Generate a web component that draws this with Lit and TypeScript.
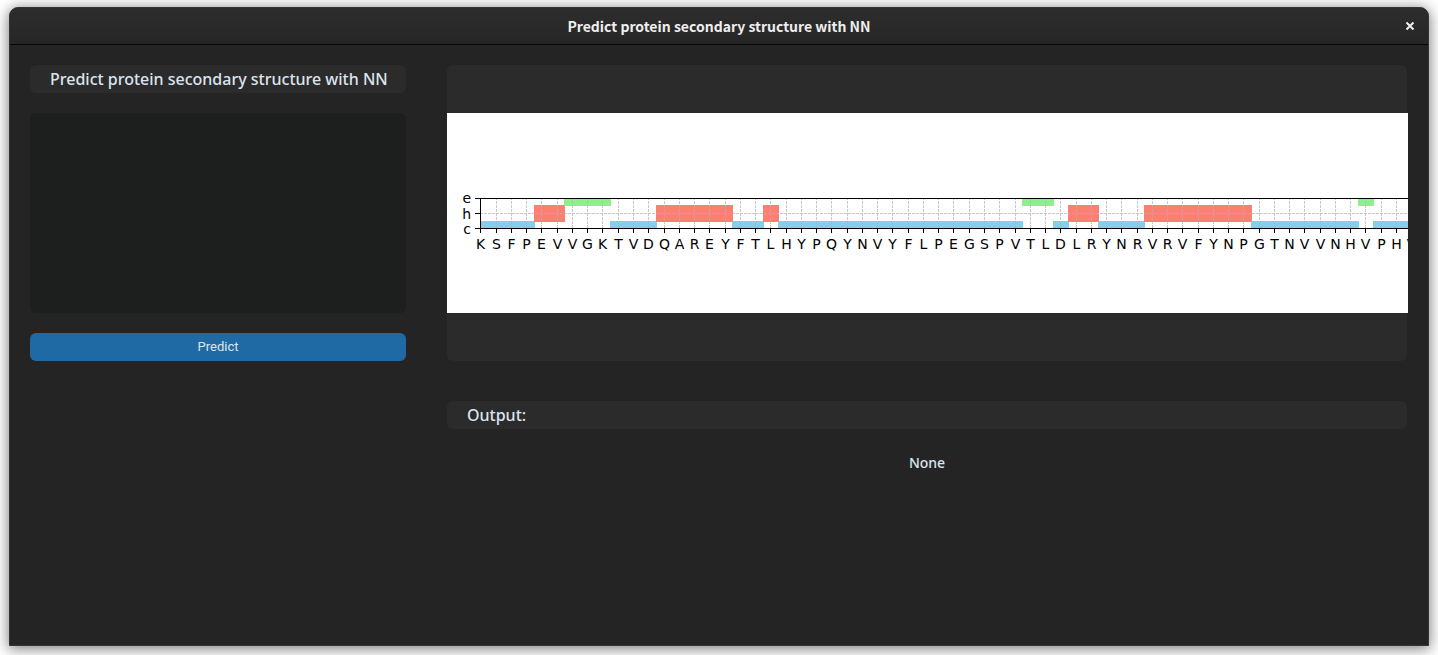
import { LitElement, html, svg, css } from "lit";
import { customElement, property } from "lit/decorators.js";

type State = "c" | "h" | "e";

const SEQUENCE = "KSFPEVVGKTVDQAREYFTLHYPQYNVYFLPEGSPVTLDLRYNRVRVFYNPGTNVVNHVPHV";

const RUNS: [State, number][] = [
  ["c", 4], ["h", 2], ["e", 3], ["c", 3], ["h", 5], ["c", 2], ["h", 1],
  ["c", 16], ["e", 2], ["c", 1], ["h", 2], ["c", 3], ["h", 7], ["c", 7],
  ["e", 1], ["c", 3],
];

const STEP = 15.26;
const ORIGIN = 33.4;
const LEFT = 33;
const TOP = 85;
const MID = 100;
const BOTTOM = 115;

const BAR: Record<State, { y: number; h: number }> = {
  e: { y: TOP, h: 8 },
  h: { y: 92, h: 17 },
  c: { y: 108, h: 8 },
};

const STATE_AXIS = [
  { name: "e", y: TOP, baseline: 90 },
  { name: "h", y: MID, baseline: 106 },
  { name: "c", y: BOTTOM, baseline: 121 },
];

@customElement("structure-plot")
export class StructurePlot extends LitElement {
  @property() sequence = SEQUENCE;

  static styles = css`
    :host { display: block; height: 200px; overflow: hidden; background: #fff; }
    .plot { display: block; width: 100%; height: 200px; }
    .e { fill: #90ee90; }
    .h { fill: #fa8072; }
    .c { fill: #87ceeb; }
    .grid { stroke: #b0b0b0; stroke-opacity: 0.7; stroke-dasharray: 3 1; }
    .axis { stroke: #000; }
    .label { font: 14px "DejaVu Sans", sans-serif; fill: #000; text-anchor: middle; }
    .state { text-anchor: end; }
  `;

  render() {
    const tick = (i: number) => Math.round(ORIGIN + STEP * i) + 0.5;
    let start = 0;
    const bars = RUNS.map(([state, count]) => {
      const x0 = Math.max(LEFT + 0.5, Math.round(ORIGIN + STEP * (start - 0.5)));
      start += count;
      const x1 = Math.round(ORIGIN + STEP * (start - 0.5)) + 1;
      const b = BAR[state];
      return svg`<rect class=${state} x=${x0} y=${b.y} width=${x1 - x0} height=${b.h} />`;
    });
    const residues = [...this.sequence];
    return html`
      <svg class="plot" role="img" aria-label="Secondary structure plot">
        ${bars}
        ${residues.map((_, i) => svg`<line class="grid" x1=${tick(i)} x2=${tick(i)} y1=${BOTTOM} y2=${TOP} />`)}
        <line class="grid" x1=${LEFT} x2="100%" y1=${MID + 0.5} y2=${MID + 0.5} />
        <line class="axis" x1=${LEFT} x2="100%" y1=${TOP + 0.5} y2=${TOP + 0.5} />
        <line class="axis" x1=${LEFT} x2="100%" y1=${BOTTOM + 0.5} y2=${BOTTOM + 0.5} />
        <line class="axis" x1=${LEFT + 0.5} x2=${LEFT + 0.5} y1=${TOP} y2=${BOTTOM + 1} />
        ${STATE_AXIS.map(({ name, y, baseline }) => svg`
          <line class="axis" x1=${LEFT - 5} x2=${LEFT} y1=${y + 0.5} y2=${y + 0.5} />
          <text class="label state" x=${LEFT - 9} y=${baseline}>${name}</text>`)}
        ${residues.map((r, i) => svg`
          <line class="axis" x1=${tick(i)} x2=${tick(i)} y1=${BOTTOM} y2=${BOTTOM + 5} />
          <text class="label" x=${tick(i)} y="136">${r}</text>`)}
      </svg>
    `;
  }
}

@customElement("app-root")
export class AppRoot extends LitElement {
  static styles = css`
    :host {
      display: block;
      box-sizing: border-box;
      height: 100vh;
      padding: 7px 9px 9px;
      background: #fff;
      font-family: "Noto Sans", sans-serif;
      color: #dce4ee;
    }
    * { box-sizing: border-box; }
    .window {
      height: 100%;
      display: flex;
      flex-direction: column;
      background: #242424;
      border: 1px solid #353535;
      border-radius: 9px 9px 0 0;
      box-shadow: 0 2px 14px 1px rgba(0, 0, 0, 0.5);
      overflow: hidden;
    }
    .titlebar {
      display: grid;
      grid-template-columns: 36px 1fr 36px;
      align-items: center;
      height: 37px;
      flex: none;
      background: linear-gradient(#2d2d2d, #262626);
      border-bottom: 1px solid #060606;
    }
    .title {
      grid-column: 2;
      margin: 0;
      text-align: center;
      font-family: "Noto Sans CJK SC", "Noto Sans", sans-serif;
      font-size: 14px;
      line-height: 20px;
      font-weight: 700;
      color: #eee;
    }
    .close {
      width: 36px;
      height: 36px;
      padding: 0;
      border: 0;
      background: none;
      display: grid;
      place-items: center;
    }
    .content {
      flex: 1;
      display: grid;
      grid-template-columns: 376px minmax(0, 1fr);
      align-items: start;
      gap: 41px;
      padding: 20px 21px 20px 20px;
    }
    .side { display: flex; flex-direction: column; gap: 20px; }
    .heading {
      display: block;
      padding: 0 20px;
      border-radius: 6px;
      background: #2b2b2b;
      font-size: 16px;
      line-height: 28px;
      font-weight: 500;
      white-space: nowrap;
    }
    .sequence {
      display: block;
      width: 100%;
      height: 200px;
      padding: 8px;
      border: 0;
      border-radius: 6px;
      outline: none;
      resize: none;
      background: #1d1e1e;
      color: inherit;
      font: inherit;
    }
    .predict {
      height: 28px;
      padding: 0 0 2px;
      border: 0;
      border-radius: 6px;
      background: #1f6aa5;
      color: #dce4ee;
      font: 13px Roboto, sans-serif;
    }
    .main { display: flex; flex-direction: column; }
    .figure { padding: 48px 0; border-radius: 6px; background: #2b2b2b; }
    .chart { margin-right: -1px; }
    .output-title { margin: 40px 0 20px; }
    .output {
      display: block;
      text-align: center;
      font-size: 14px;
      line-height: 28px;
      font-weight: 500;
    }
  `;

  render() {
    return html`
      <div class="window">
        <header class="titlebar">
          <h1 class="title">Predict protein secondary structure with NN</h1>
          <button class="close" aria-label="Close">
            <svg width="10" height="10" viewBox="0 0 10 10" stroke="#eee" stroke-width="2">
              <path d="M1.5 1.5l7 7M8.5 1.5l-7 7" />
            </svg>
          </button>
        </header>
        <main class="content">
          <section class="side">
            <label class="heading" for="sequence">Predict protein secondary structure with NN</label>
            <textarea class="sequence" id="sequence" spellcheck="false"></textarea>
            <button class="predict">Predict</button>
          </section>
          <section class="main">
            <div class="figure"><structure-plot class="chart"></structure-plot></div>
            <label class="heading output-title" for="output">Output:</label>
            <output class="output" id="output">None</output>
          </section>
        </main>
      </div>
    `;
  }
}
